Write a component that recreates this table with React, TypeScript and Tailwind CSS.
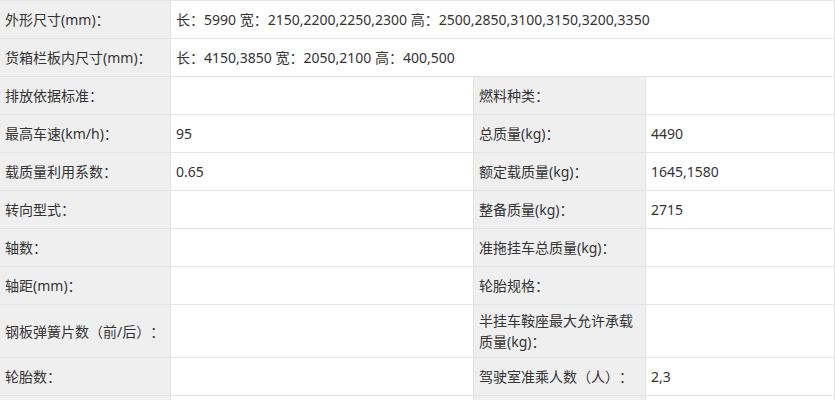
const rows: [string, string, string, string][] = [
  ["排放依据标准：", "", "燃料种类：", ""],
  ["最高车速(km/h)：", "95", "总质量(kg)：", "4490"],
  ["载质量利用系数：", "0.65", "额定载质量(kg)：", "1645,1580"],
  ["转向型式：", "", "整备质量(kg)：", "2715"],
  ["轴数：", "", "准拖挂车总质量(kg)：", ""],
  ["轴距(mm)：", "", "轮胎规格：", ""],
  ["钢板弹簧片数（前/后）：", "", "半挂车鞍座最大允许承载质量(kg)：", ""],
  ["轮胎数：", "", "驾驶室准乘人数（人）：", "2,3"],
  ["", "", "", ""],
];

const label = "bg-[#efefef] border border-[#e4e4e4] px-[5px] py-[5px] align-middle";
const value = "bg-white border border-[#e4e4e4] px-[5px] py-[5px] align-middle";

export default function App() {
  return (
    <div
      className="w-[835px] h-[400px] overflow-hidden bg-white text-[14px] leading-[21px] text-[#333] [text-spacing-trim:space-all]"
      style={{ fontFamily: '"Noto Sans", "Noto Sans CJK SC", sans-serif' }}
    >
      <table className="w-[836px] border-collapse table-fixed -ml-px">
        <colgroup>
          <col className="w-[171px]" />
          <col className="w-[303px]" />
          <col className="w-[172px]" />
          <col />
        </colgroup>
        <tbody>
          <tr className="h-[38px]">
            <td className={label}>外形尺寸(mm)：</td>
            <td className={value} colSpan={3}>
              长：5990 宽：2150,2200,2250,2300 高：2500,2850,3100,3150,3200,3350
            </td>
          </tr>
          <tr className="h-[38px]">
            <td className={label}>货箱栏板内尺寸(mm)：</td>
            <td className={value} colSpan={3}>
              长：4150,3850 宽：2050,2100 高：400,500
            </td>
          </tr>
          {rows.map((r, i) => (
            <tr key={i} className="h-[38px]">
              <td className={label}>{r[0]}</td>
              <td className={value}>{r[1]}</td>
              <td className={label}>{r[2]}</td>
              <td className={value}>{r[3]}</td>
            </tr>
          ))}
        </tbody>
      </table>
    </div>
  );
}
